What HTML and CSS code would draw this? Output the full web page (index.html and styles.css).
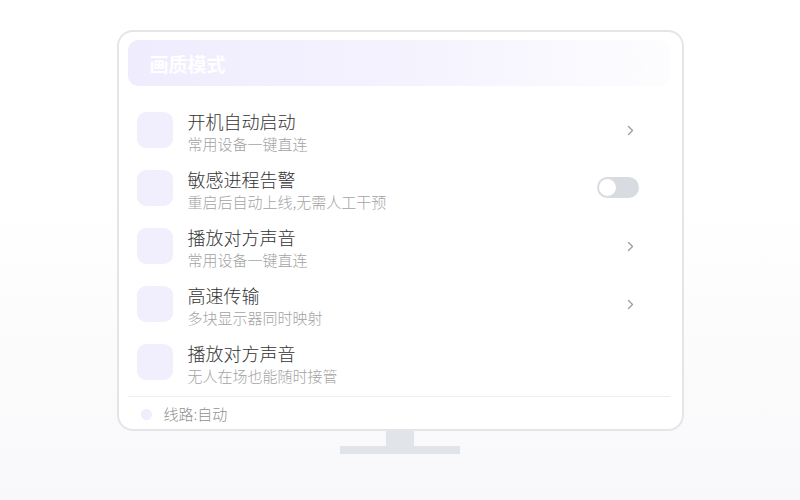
FILE: index.html
```html
<!DOCTYPE html>
<html lang="zh-CN">
<head>
    <meta charset="UTF-8">
    <meta name="viewport" content="width=device-width, initial-scale=1.0">
    <title>画质模式</title>
    <link rel="stylesheet" href="styles.css">
</head>
<body>
    <div class="stage">
        <div class="monitor">
            <div class="screen">
                <div class="mode-bar">
                    <span class="mode-title">画质模式</span>
                    <span class="mode-hint">画质模式</span>
                </div>

                <ul class="setting-list">
                    <li class="setting">
                        <div class="setting-icon"></div>
                        <div class="setting-text">
                            <div class="setting-name">开机自动启动</div>
                            <div class="setting-desc">常用设备一键直连</div>
                        </div>
                        <span class="chevron">
                            <svg width="7" height="11" viewBox="0 0 7 11"><path d="M1.5 1.5 L5.5 5.5 L1.5 9.5" fill="none" stroke="#979ca5" stroke-width="1.3" stroke-linecap="round" stroke-linejoin="round"/></svg>
                        </span>
                    </li>
                    <li class="setting">
                        <div class="setting-icon"></div>
                        <div class="setting-text">
                            <div class="setting-name">敏感进程告警</div>
                            <div class="setting-desc">重启后自动上线,无需人工干预</div>
                        </div>
                        <span class="switch"><span class="knob"></span></span>
                    </li>
                    <li class="setting">
                        <div class="setting-icon"></div>
                        <div class="setting-text">
                            <div class="setting-name">播放对方声音</div>
                            <div class="setting-desc">常用设备一键直连</div>
                        </div>
                        <span class="chevron">
                            <svg width="7" height="11" viewBox="0 0 7 11"><path d="M1.5 1.5 L5.5 5.5 L1.5 9.5" fill="none" stroke="#979ca5" stroke-width="1.3" stroke-linecap="round" stroke-linejoin="round"/></svg>
                        </span>
                    </li>
                    <li class="setting">
                        <div class="setting-icon"></div>
                        <div class="setting-text">
                            <div class="setting-name">高速传输</div>
                            <div class="setting-desc">多块显示器同时映射</div>
                        </div>
                        <span class="chevron">
                            <svg width="7" height="11" viewBox="0 0 7 11"><path d="M1.5 1.5 L5.5 5.5 L1.5 9.5" fill="none" stroke="#979ca5" stroke-width="1.3" stroke-linecap="round" stroke-linejoin="round"/></svg>
                        </span>
                    </li>
                    <li class="setting">
                        <div class="setting-icon"></div>
                        <div class="setting-text">
                            <div class="setting-name">播放对方声音</div>
                            <div class="setting-desc">无人在场也能随时接管</div>
                        </div>
                    </li>
                </ul>

                <div class="route">
                    <span class="route-dot"></span>
                    <span class="route-label">线路:自动</span>
                </div>
            </div>
        </div>
        <div class="neck"></div>
        <div class="base"></div>
    </div>
</body>
</html>
```

FILE: styles.css
```css
html, body {
    height: 100%;
}
body {
    margin: 0;
    font-family: "Noto Sans CJK SC", "Noto Sans", sans-serif;
    background: linear-gradient(180deg, #ffffff 0%, #ffffff 40%, #f8f8fa 100%);
}
.stage {
    display: flex;
    flex-direction: column;
    align-items: center;
    padding-top: 30px;
}
.monitor {
    width: 563px;
    height: 397px;
    border: 2px solid #e3e5e9;
    border-radius: 16px;
    background: #fff;
    box-sizing: content-box;
}
.screen {
    padding: 8px 12px 0 9px;
}
.mode-bar {
    height: 46px;
    border-radius: 10px;
    background: linear-gradient(90deg, #efecfe 0%, #f5f3fe 55%, #fdfdff 100%);
    display: flex;
    align-items: center;
    justify-content: space-between;
    padding: 0 22px;
}
.mode-title {
    color: #fff;
    font-size: 19px;
    font-weight: bold;
}
.mode-hint {
    color: #fbfbfe;
    font-size: 13px;
    margin-right: 4px;
}
.setting-list {
    list-style: none;
    margin: 26px 0 0;
    padding: 0;
}
.setting {
    display: flex;
    align-items: center;
    height: 58px;
    padding-left: 9px;
}
.setting-icon {
    width: 36px;
    height: 36px;
    border-radius: 9px;
    background: #f1effd;
    flex: none;
    align-self: flex-start;
}
.setting-text {
    flex: 1;
    margin-left: 15px;
    align-self: flex-start;
    margin-top: -3px;
}
.setting-name {
    font-size: 18px;
    font-weight: 300;
    color: #333;
    line-height: 25px;
}
.setting-desc {
    font-size: 15px;
    font-weight: 300;
    color: #a3a3a3;
    line-height: 20px;
}
.chevron {
    margin-right: 36px;
    align-self: flex-start;
    margin-top: 13px;
    display: flex;
}
.switch {
    align-self: flex-start;
    margin-top: 7px;
    margin-right: 31px;
    width: 42px;
    height: 21px;
    border-radius: 11px;
    background: #d8dbe0;
    position: relative;
}
.knob {
    position: absolute;
    left: 2px;
    top: 2px;
    width: 17px;
    height: 17px;
    border-radius: 50%;
    background: #fff;
}
.route {
    margin-top: -6px;
    border-top: 1px solid #eeeef2;
    display: flex;
    align-items: center;
    height: 34px;
    padding-left: 13px;
}
.route-dot {
    width: 11px;
    height: 11px;
    border-radius: 50%;
    background: #f0eefc;
}
.route-label {
    margin-left: 12px;
    font-size: 15px;
    font-weight: 300;
    color: #909090;
    margin-top: -1px;
}
.neck {
    width: 28px;
    height: 15px;
    background: #e1e4e8;
}
.base {
    width: 120px;
    height: 8px;
    background: #e1e4e8;
}
```
